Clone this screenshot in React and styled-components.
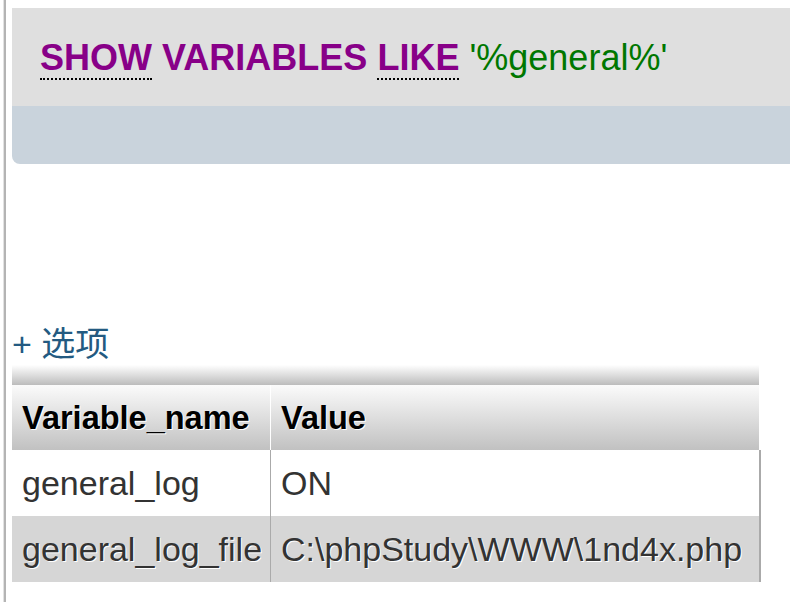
import React from "react";
import styled, { createGlobalStyle } from "styled-components";

const GlobalStyle = createGlobalStyle`
  html, body {
    margin: 0;
    padding: 0;
    background: #fff;
    overflow: hidden;
  }
  body {
    font-family: "Liberation Sans", Arial, "Noto Sans CJK SC", sans-serif;
  }
`;

const PageStyled = styled.div`
  min-height: 602px;
  margin-left: 4px;
  border-left: 2px solid #b4b4b4;
  box-shadow: -1px 0 0 #e2e2e2;
  padding-left: 6px;
  padding-top: 8px;
`;

const QueryPanel = styled.div`
  margin-right: -30px;
  border-radius: 0 0 0 8px;
  overflow: hidden;
  background: #c9d3dc;
`;

const QueryText = styled.div`
  background: #dfdfdf;
  padding: 29px 28px 27px;
  font-size: 36px;
  line-height: 42px;
  white-space: nowrap;
`;

const Keyword = styled.span`
  color: #880088;
  font-weight: bold;
  border-bottom: ${(p) => (p.$doc ? "2px dotted #000" : "none")};
`;

const Quoted = styled.span`
  color: #007700;
`;

const PanelFooter = styled.div`
  height: 58px;
`;

const OptionsLink = styled.a`
  display: block;
  margin-top: 161px;
  margin-bottom: 2px;
  font-family: "Liberation Sans", Arial, "Noto Sans CJK SC", sans-serif;
  font-size: 34px;
  line-height: 38px;
  color: #235a81;
  text-decoration: none;
`;

const TopStrip = styled.div`
  width: 747px;
  height: 20px;
  background: linear-gradient(#ffffff, #bcbcbc);
`;

const Table = styled.table`
  border-collapse: separate;
  border-spacing: 0;
  table-layout: fixed;
  width: 749px;
`;

const Th = styled.th`
  text-align: left;
  font: bold 32.5px/40px "Liberation Sans", Arial, sans-serif;
  color: #000;
  text-shadow: 1px 1px 0 #fff;
  padding: 13px 10px 12px;
  background: linear-gradient(#fbfbfb, #c1c1c1);
  background-clip: padding-box;
  white-space: nowrap;
  & + & {
    border-left: 1px solid #fff;
    border-right: 2px solid transparent;
  }
`;

const Td = styled.td`
  font: 34px/40px "Liberation Sans", Arial, sans-serif;
  color: #333;
  text-shadow: 1px 1px 0 #fff;
  padding: 13px 10px;
  background: ${(p) => (p.$even ? "#d6d6d6" : "#fff")};
  white-space: nowrap;
  & + & {
    border-left: 1px solid #aaa;
    border-right: 2px solid #aaa;
  }
`;

const rows = [
  { name: "general_log", value: "ON" },
  { name: "general_log_file", value: "C:\\phpStudy\\WWW\\1nd4x.php" },
];

export default function App() {
  return (
    <>
      <GlobalStyle />
      <PageStyled>
        <QueryPanel>
          <QueryText>
            <Keyword $doc>SHOW</Keyword> <Keyword>VARIABLES</Keyword>{" "}
            <Keyword $doc>LIKE</Keyword> <Quoted>'%general%'</Quoted>
          </QueryText>
          <PanelFooter />
        </QueryPanel>
        <OptionsLink href="#">+ 选项</OptionsLink>
        <TopStrip />
        <Table>
          <colgroup>
            <col style={{ width: 258 }} />
            <col style={{ width: 491 }} />
          </colgroup>
          <thead>
            <tr>
              <Th>Variable_name</Th>
              <Th>Value</Th>
            </tr>
          </thead>
          <tbody>
            {rows.map((row, i) => (
              <tr key={row.name}>
                <Td $even={i % 2 === 1}>{row.name}</Td>
                <Td $even={i % 2 === 1}>{row.value}</Td>
              </tr>
            ))}
          </tbody>
        </Table>
      </PageStyled>
    </>
  );
}
